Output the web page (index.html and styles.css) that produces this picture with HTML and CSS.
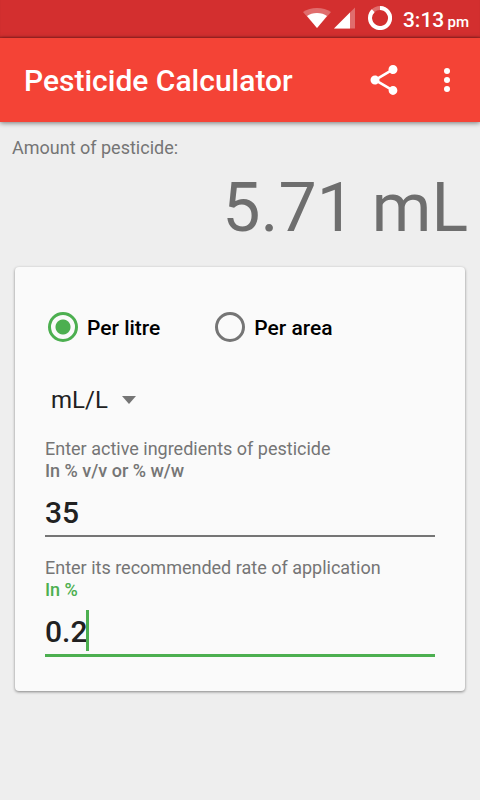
FILE: index.html
```html
<!doctype html>
<html lang="en">
    <head>
        <meta charset="UTF-8" />
        <meta name="viewport" content="width=device-width, initial-scale=1.0" />
        <title>Pesticide Calculator</title>
        <link rel="stylesheet" href="styles.css">
    </head>
    <body>
        <div class="status-bar">
            <svg class="wifi" width="28" height="20" viewBox="0 0 28 20">
                <path fill="#fff" fill-opacity="0.3" d="M14 20 0 4Q6 0 14 0T28 4Z" />
                <path fill="#fff" d="M14 20 4 8Q8 5 14 5T24 8Z" />
            </svg>
            <svg class="signal" width="21" height="22" viewBox="0 0 21 21">
                <path fill="#fff" fill-opacity="0.3" d="M21 0V21H0Z" />
                <path fill="#fff" d="M16 5V21H0Z" />
            </svg>
            <svg class="battery" width="24" height="24" viewBox="0 0 24 24" fill="none" stroke="#fff" stroke-width="4">
                <circle cx="12" cy="12" r="10" stroke-opacity="0.3" />
                <path d="M12 2A10 10 0 1 1 5.2 4.700" />
            </svg>
            <div class="clock">3:13 <span class="ampm">pm</span></div>
        </div>
        <header class="app-bar">
            <h1>Pesticide Calculator</h1>
            <button class="icon-button" type="button" aria-label="Share">
                <svg width="36" height="36" viewBox="0 0 24 24" fill="#fff">
                    <path d="M18 16.08c-.76 0-1.44.3-1.96.77L8.91 12.7c.05-.23.09-.46.09-.7s-.04-.47-.09-.7l7.05-4.11c.54.5 1.25.81 2.04.81 1.66 0 3-1.34 3-3s-1.34-3-3-3-3 1.34-3 3c0 .24.04.47.09.7L8.04 9.81C7.5 9.31 6.79 9 6 9c-1.66 0-3 1.34-3 3s1.34 3 3 3c.79 0 1.5-.31 2.04-.81l7.12 4.16c-.05.21-.08.43-.08.65 0 1.61 1.31 2.92 2.92 2.92s2.92-1.31 2.92-2.92-1.31-2.92-2.92-2.92z" />
                </svg>
            </button>
            <button class="icon-button" type="button" aria-label="More options">
                <svg width="36" height="36" viewBox="0 0 24 24" fill="#fff">
                    <circle cx="12" cy="6" r="2" />
                    <circle cx="12" cy="12" r="2" />
                    <circle cx="12" cy="18" r="2" />
                </svg>
            </button>
        </header>
        <main>
            <p class="result-label">Amount of pesticide:</p>
            <p class="result">5.71 mL</p>
            <form class="card">
                <div class="modes">
                    <label class="mode"><input type="radio" name="mode" checked /><span>Per litre</span></label>
                    <label class="mode"><input type="radio" name="mode" /><span>Per area</span></label>
                </div>
                <div class="unit">
                    <select aria-label="Unit">
                        <option>mL/L</option>
                    </select>
                    <svg class="arrow" width="14" height="8" viewBox="0 0 14 8">
                        <path fill="#757575" d="M0 0H14L7 8Z" />
                    </svg>
                </div>
                <div class="field">
                    <label for="ingredients">Enter active ingredients of pesticide
                        <span class="hint">In % v/v or % w/w</span>
                    </label>
                    <input id="ingredients" type="text" inputmode="decimal" value="35" />
                </div>
                <div class="field active">
                    <label for="rate">Enter its recommended rate of application
                        <span class="hint">In %</span>
                    </label>
                    <input id="rate" type="text" inputmode="decimal" value="0.2" />
                    <span class="caret"></span>
                </div>
            </form>
        </main>
    </body>
</html>
```
FILE: styles.css
```css
* {
    box-sizing: border-box;
}
body {
    margin: 0;
    min-height: 100vh;
    font-family: Roboto, sans-serif;
    background: #eeeeee;
    color: #212121;
}
h1,
p {
    margin: 0;
}
.status-bar {
    display: flex;
    align-items: center;
    justify-content: flex-end;
    height: 38px;
    padding: 0 11px 2px 0;
    background: #d32f2f;
    box-shadow: inset 0 -2px 2px -1px rgba(0, 0, 0, 0.25);
    color: #fff;
}
.signal {
    margin-left: 3px;
}
.battery {
    margin: 0 11px 0 13px;
}
.clock {
    padding-top: 5px;
    font-size: 21px;
    font-weight: 500;
    line-height: 24px;
}
.ampm {
    margin-left: -2px;
    font-size: 15px;
}
.app-bar {
    display: flex;
    align-items: center;
    height: 84px;
    padding: 0 6px 0 24px;
    background: #f44336;
    box-shadow: 0 1px 5px rgba(0, 0, 0, 0.5);
    color: #fff;
}
h1 {
    flex: 1;
    font-size: 30px;
    font-weight: 500;
}
.icon-button {
    display: flex;
    align-items: center;
    justify-content: center;
    width: 54px;
    height: 72px;
    padding: 0;
    border: none;
    background: none;
    cursor: pointer;
}
.icon-button:first-of-type {
    margin-right: 9px;
}
main {
    padding: 15px 12px;
}
.result-label {
    font-size: 18px;
    line-height: 22px;
    color: #757575;
}
.result {
    font-size: 68px;
    line-height: 80px;
    margin: 9px 0 19px;
    color: #6e6e6e;
    text-align: right;
}
.card {
    margin: 0 3px;
    padding: 45px 30px 34px;
    border-radius: 4px;
    background: #fafafa;
    box-shadow: 0 1px 3px rgba(0, 0, 0, 0.45);
}
.modes {
    display: flex;
    gap: 55px;
    padding-left: 3px;
}
.mode {
    display: flex;
    align-items: center;
    gap: 9px;
    font-size: 21px;
    font-weight: 500;
    color: #000;
}
.mode span {
    padding-top: 2px;
}
.mode input {
    appearance: none;
    width: 30px;
    height: 30px;
    margin: 0;
    border: 3px solid #757575;
    border-radius: 50%;
}
.mode input:checked {
    border-color: #4caf50;
    background: radial-gradient(circle, #4caf50 7px, transparent 8px);
}
.unit {
    display: flex;
    align-items: center;
    margin: 39px 0 20px;
    padding-left: 6px;
}
.unit select {
    appearance: none;
    height: 37px;
    padding: 0 28px 0 0;
    border: none;
    background: none;
    font: 24px Roboto, sans-serif;
    color: #212121;
}
.arrow {
    margin-left: -14px;
    pointer-events: none;
}
.field {
    position: relative;
    margin-bottom: 20px;
}
.field:last-child {
    margin-bottom: 0;
}
.field label {
    display: block;
    font-size: 18px;
    line-height: 22px;
    color: #757575;
}
.hint {
    display: block;
    font-weight: 500;
}
.field input {
    display: block;
    width: 100%;
    height: 55px;
    padding: 10px 0 2px;
    border: none;
    border-bottom: 2px solid #757575;
    outline: none;
    background: none;
    font: 500 30px Roboto, sans-serif;
    color: #212121;
}
.active .hint {
    color: #4caf50;
}
.active input {
    height: 56px;
    border-bottom: 3px solid #4caf50;
}
.caret {
    position: absolute;
    left: 41px;
    bottom: 6px;
    width: 3px;
    height: 41px;
    background: #4caf50;
}
```
